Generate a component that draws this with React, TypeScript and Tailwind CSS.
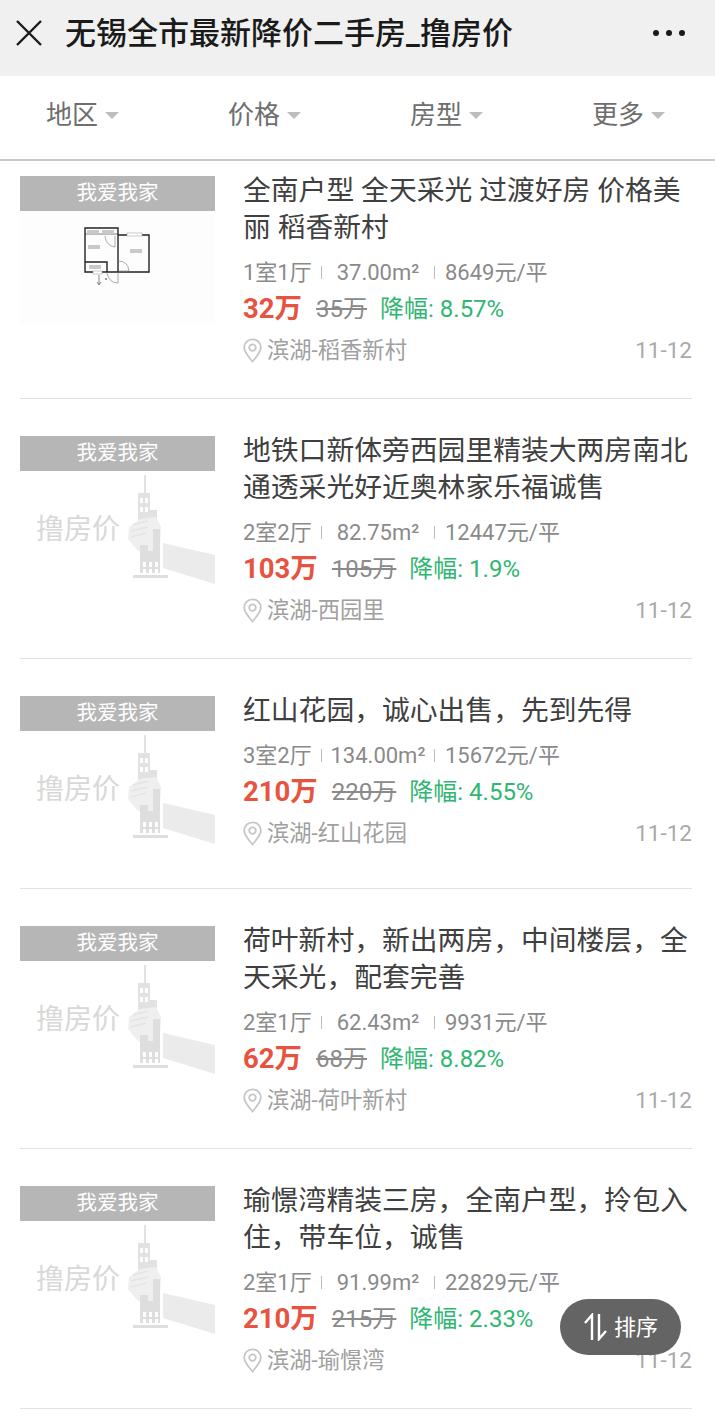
const FONT = "font-[Roboto,'Noto_Sans_CJK_SC',sans-serif]";

type Listing = {
  title: string;
  layout: string;
  area: string;
  unit: string;
  price: string;
  was: string;
  drop: string;
  place: string;
  plan?: boolean;
};

const listings: Listing[] = [
  { title: "全南户型 全天采光 过渡好房 价格美丽 稻香新村", layout: "1室1厅", area: "37.00m²", unit: "8649元/平", price: "32万", was: "35万", drop: "降幅: 8.57%", place: "滨湖-稻香新村", plan: true },
  { title: "地铁口新体旁西园里精装大两房南北通透采光好近奥林家乐福诚售", layout: "2室2厅", area: "82.75m²", unit: "12447元/平", price: "103万", was: "105万", drop: "降幅: 1.9%", place: "滨湖-西园里" },
  { title: "红山花园，诚心出售，先到先得", layout: "3室2厅", area: "134.00m²", unit: "15672元/平", price: "210万", was: "220万", drop: "降幅: 4.55%", place: "滨湖-红山花园" },
  { title: "荷叶新村，新出两房，中间楼层，全天采光，配套完善", layout: "2室1厅", area: "62.43m²", unit: "9931元/平", price: "62万", was: "68万", drop: "降幅: 8.82%", place: "滨湖-荷叶新村" },
  { title: "瑜憬湾精装三房，全南户型，拎包入住，带车位，诚售", layout: "2室1厅", area: "91.99m²", unit: "22829元/平", price: "210万", was: "215万", drop: "降幅: 2.33%", place: "滨湖-瑜憬湾" },
];

function CloseIcon() {
  return (
    <svg width="28" height="28" viewBox="0 0 28 28" fill="none" stroke="#1a1a1a" strokeWidth="2.4">
      <path d="M2 2 L26 26 M26 2 L2 26" />
    </svg>
  );
}

function PinIcon() {
  return (
    <svg width="19" height="25" viewBox="0 0 19 25" fill="none" stroke="#c6c6c6" strokeWidth="1.8">
      <path d="M9.5 23.5 C6 19 1.2 14.6 1.2 9.6 A8.3 8.3 0 0 1 17.8 9.6 C17.8 14.6 13 19 9.5 23.5 Z" />
      <circle cx="9.5" cy="9.6" r="3.3" />
    </svg>
  );
}

function SortIcon() {
  return (
    <svg width="26" height="28" viewBox="0 0 26 28" fill="none" stroke="#ffffff" strokeWidth="2.4">
      <path d="M9 27 V2 L2 10" />
      <path d="M16 1 V26 L23 18" />
    </svg>
  );
}

// Small floor plan shown for listings that have a real photo
function FloorPlan() {
  return (
    <svg width="195" height="114" viewBox="0 0 195 114" className="block bg-[#fdfdfd]">
      <g fill="none" stroke="#222" strokeWidth="1.4">
        <path d="M65 17 H98 V61 H65 Z" />
        <path d="M98 24 H129 V61 H98" />
        <path d="M65 51 H87 V61" />
        <path d="M65 23 H98" strokeWidth="0.6" />
      </g>
      <g fill="#c9c9c9">
        <rect x="67" y="19" width="12" height="4" />
        <rect x="82" y="19" width="12" height="4" />
        <rect x="68" y="34" width="12" height="4" />
        <rect x="110" y="38" width="12" height="4" />
        <rect x="69" y="54" width="12" height="4" />
      </g>
      <rect x="107" y="22" width="15" height="3" fill="#fff" stroke="#999" strokeWidth="0.5" />
      <rect x="73" y="60" width="9" height="3" fill="#fff" stroke="#999" strokeWidth="0.5" />
      <g fill="none" stroke="#888" strokeWidth="0.7">
        <path d="M85 25 Q86 35 95 36 V25" />
        <path d="M98 50 Q108 50 109 60 H98" />
        <path d="M98 61 V72 Q89 72 87 62" />
      </g>
      <path d="M79 64 V73 M77 71 L79 74 L81 71" fill="none" stroke="#555" strokeWidth="0.7" />
      <rect x="85" y="67" width="2" height="2" fill="#999" />
    </svg>
  );
}

// Watermark logo: a tower gripped by a hand, with the brand name beside it
function Placeholder() {
  return (
    <div className="relative h-[113px] bg-white">
      <svg width="195" height="113" viewBox="0 0 195 113" className="absolute inset-0">
        <path d="M143 72 L195 84 V113 L143 97 Z" fill="#ebebeb" />
        <path d="M124 4 H126 V22 H124 Z" fill="#e2e2e2" />
        <path d="M118 22 H130 V39 H137 V50 H118 Z" fill="#e2e2e2" />
        <path d="M109 56 L120 48 L136 46 L141 56 L140 74 L138 84 L118 80 L108 68 Z" fill="#efefef" />
        <path d="M113 54 L128 50 M111 60 L128 56 M111 66 L126 62" stroke="#e4e4e4" strokeWidth="1.5" fill="none" />
        <path d="M120 74 H128 V80 H140 V102 H120 Z" fill="#dedede" />
        <path d="M133 58 H140 V82 H133 Z" fill="#dedede" />
        <rect x="113" y="104" width="35" height="3" fill="#dedede" />
        <g fill="#ffffff">
          <rect x="120" y="27" width="3" height="5" />
          <rect x="125" y="27" width="3" height="5" />
          <rect x="120" y="36" width="3" height="5" />
          <rect x="125" y="36" width="3" height="5" />
          <rect x="123" y="91" width="3" height="5" />
          <rect x="129" y="91" width="3" height="5" />
          <rect x="135" y="91" width="3" height="5" />
          <rect x="123" y="98" width="3" height="5" />
          <rect x="129" y="98" width="3" height="5" />
          <rect x="135" y="98" width="3" height="5" />
        </g>
      </svg>
      <div className="relative pl-[16px] pt-[41px] text-[28px] leading-[36px] text-[#d8d8d8]">撸房价</div>
    </div>
  );
}

function ListingRow({ item, first }: { item: Listing; first: boolean }) {
  const oneLine = item.title.length < 16;
  const rowBox = first ? "h-[238px] pt-[15px]" : oneLine ? "h-[230px] pt-[37px]" : "h-[260px] pt-[37px]";
  return (
    <div className={`ml-[20px] mr-[23px] flex border-b border-[#e2e2e2] ${rowBox}`}>
      <div className="w-[195px] shrink-0">
        <div className="flex h-[35px] items-center justify-center bg-[#b6b6b6] text-[20.5px] text-white">我爱我家</div>
        {item.plan ? <FloorPlan /> : <Placeholder />}
      </div>
      <div className="ml-[28px] min-w-0 flex-1 -mt-[4px]">
        <div className="text-[27.8px] leading-[37px] text-[#404040]">{item.title}</div>
        <div className="mt-[8px] flex h-[36px] items-center text-[22px] text-[#8a8a8a]">
          <span className="w-[68px] shrink-0 whitespace-nowrap">{item.layout}</span>
          <span className="ml-[10px] h-[13px] w-px shrink-0 bg-[#bdbdbd]" />
          <span className="w-[112px] shrink-0 whitespace-nowrap text-center">{item.area}</span>
          <span className="h-[13px] w-px shrink-0 bg-[#bdbdbd]" />
          <span className="ml-[10px] whitespace-nowrap">{item.unit}</span>
        </div>
        <div className="flex h-[38px] items-center whitespace-nowrap">
          <span className="text-[27.5px] font-bold text-[#e8533f]">{item.price}</span>
          <span className="ml-[14px] text-[24px] text-[#8a8a8a] line-through">{item.was}</span>
          <span className="ml-[13px] text-[24px] text-[#2fb671]">{item.drop}</span>
        </div>
        <div className="mt-[1px] flex h-[42px] items-center">
          <PinIcon />
          <span className="ml-[5px] text-[22.3px] leading-[30px] text-[#a0a0a0]">{item.place}</span>
          <span className="ml-auto text-[22.5px] leading-[30px] text-[#a9a9a9]">11-12</span>
        </div>
      </div>
    </div>
  );
}

export default function App() {
  const filters = ["地区", "价格", "房型", "更多"];
  return (
    <div className={`relative h-[1418px] w-[715px] overflow-hidden bg-white ${FONT}`}>
      <div className="flex h-[76px] items-center bg-[#f0f0f0] pb-[10px]">
        <div className="ml-[15px]">
          <CloseIcon />
        </div>
        <div className="ml-[22px] whitespace-nowrap text-[31px] font-medium leading-none text-[#1a1a1a]">无锡全市最新降价二手房_撸房价</div>
        <div className="ml-auto mr-[30px] flex gap-[7px]">
          <span className="h-[6px] w-[6px] rounded-full bg-[#1a1a1a]" />
          <span className="h-[6px] w-[6px] rounded-full bg-[#1a1a1a]" />
          <span className="h-[6px] w-[6px] rounded-full bg-[#1a1a1a]" />
        </div>
      </div>

      <div className="flex h-[85px] gap-[109px] border-b-2 border-[#c9c9c9] pb-[18px] pl-[46px] pt-[14px]">
        {filters.map((f) => (
          <div key={f} className="flex w-[73px] shrink-0 items-center text-[26px] text-[#6e6e6e]">
            <span className="whitespace-nowrap">{f}</span>
            <span className="ml-[7px] h-0 w-0 shrink-0 border-x-[7.5px] border-t-[7px] border-x-transparent border-t-[#bdbdbd]" />
          </div>
        ))}
      </div>

      {listings.map((item, i) => (
        <ListingRow key={item.title} item={item} first={i === 0} />
      ))}

      <div className="absolute left-[560px] top-[1299px] flex h-[56px] w-[121px] items-center justify-center rounded-full bg-[#646464] text-[22px] text-white">
        <SortIcon />
        <span className="ml-[5px]">排序</span>
      </div>
    </div>
  );
}
